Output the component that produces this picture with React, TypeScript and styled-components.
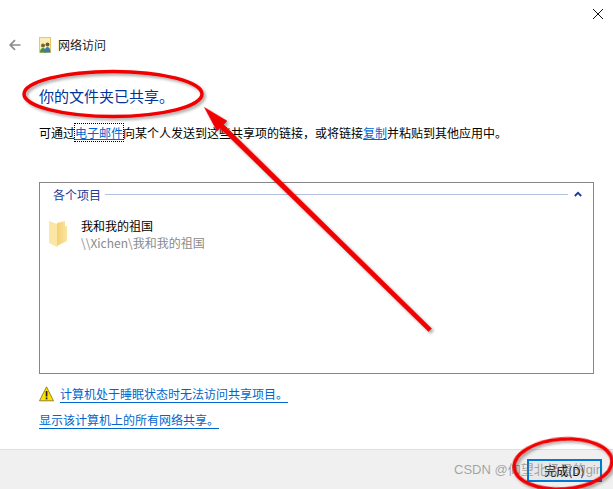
import React from 'react';
import styled, { createGlobalStyle } from 'styled-components';

const GlobalStyle = createGlobalStyle`
  html, body {
    margin: 0;
    padding: 0;
    background: #fff;
  }
  body {
    font-family: "Noto Sans CJK SC", "Liberation Sans", sans-serif;
    font-size: 12px;
  }
`;

const Window = styled.div`
  position: relative;
  width: 613px;
  height: 489px;
  display: flex;
  flex-direction: column;
  overflow: hidden;
  background: #fff;
`;

const TitleBar = styled.div`
  height: 37px;
  display: flex;
  justify-content: flex-end;
  padding: 9px 10px 0 0;
  box-sizing: border-box;
`;

const NavRow = styled.div`
  height: 16px;
  display: flex;
  align-items: center;
  padding-left: 9px;
  color: #1a1a1a;
  line-height: 16px;
`;

const NavIcon = styled.svg`
  margin-left: 18px;
  margin-right: 7px;
`;

const Content = styled.div`
  flex: 1;
  padding: 33px 19px 0 39px;
  display: flex;
  flex-direction: column;
`;

const Heading = styled.h1`
  margin: 0;
  font-size: 15px;
  font-weight: 400;
  line-height: 20px;
  color: #003399;
`;

const Description = styled.p`
  margin: 18px 0 0;
  line-height: 18px;
  color: #000;
`;

const InlineLink = styled.a<{ $focused?: boolean }>`
  color: #0066cc;
  text-decoration: underline;
  outline: ${props => (props.$focused ? '1px dotted #000' : 'none')};
`;

const ItemsBox = styled.section`
  margin-top: 40px;
  height: 192px;
  box-sizing: border-box;
  border: 1px solid #868686;
  padding: 2px 11px 0 13px;
`;

const GroupHeader = styled.div`
  display: flex;
  align-items: center;
  height: 18px;
  color: #1f3a93;
`;

const GroupLine = styled.div`
  flex: 1;
  height: 1px;
  margin: 0 6px 0 4px;
  background: #b4c0e0;
`;

const ItemRow = styled.div`
  display: flex;
  margin: 18px 0 0 -4px;
`;

const ItemText = styled.div`
  margin-left: 13px;
  margin-top: -4px;
`;

const ItemName = styled.div`
  line-height: 17px;
  color: #000;
`;

const ItemPath = styled.div`
  line-height: 17px;
  color: #8a8a8a;
`;

const NoticeRow = styled.div`
  margin-top: 11px;
  height: 18px;
  display: flex;
  align-items: center;
  gap: 6px;
`;

const FooterLink = styled.a`
  color: #0066cc;
  line-height: 16px;
  border-bottom: 1px solid #0066cc;
`;

const AllSharesRow = styled.div`
  margin-top: 8px;
  height: 18px;
  display: flex;
  align-items: center;
`;

const Footer = styled.footer`
  height: 40px;
  box-sizing: border-box;
  border-top: 1px solid #dfdfdf;
  background: #f0f0f0;
  display: flex;
  justify-content: flex-end;
  padding: 9px 11px 0 0;
`;

const DoneButton = styled.button`
  width: 75px;
  height: 23px;
  box-sizing: border-box;
  padding: 0;
  border: 2px solid #0078d7;
  background: #e8e8e8;
  color: #000;
  font: inherit;
  line-height: 16px;
`;

const Watermark = styled.div`
  position: absolute;
  left: 454px;
  top: 461px;
  font-family: "Liberation Sans", "Noto Sans CJK SC", sans-serif;
  font-size: 13px;
  line-height: 18px;
  color: rgba(110, 110, 110, 0.6);
  white-space: nowrap;
  pointer-events: none;
`;

const Annotations = styled.svg`
  position: absolute;
  inset: 0;
  pointer-events: none;
`;

const App: React.FC = () => {
  return (
    <Window>
      <GlobalStyle />
      <TitleBar>
        <svg width="10" height="10" viewBox="0 0 10 10">
          <path d="M0 0L10 10M10 0L0 10" stroke="#111" strokeWidth="1" fill="none" />
        </svg>
      </TitleBar>
      <NavRow>
        <svg width="12" height="12" viewBox="0 0 12 12">
          <path d="M11.5 6H1.5M6 1.2L1.2 6L6 10.8" stroke="#8c8c8c" strokeWidth="1.7" fill="none" />
        </svg>
        <NavIcon width="12" height="16" viewBox="0 0 12 16">
          <rect x="0.5" y="0.5" width="11" height="15" fill="#fbeeb4" stroke="#e8c860" />
          <circle cx="4" cy="8.500" r="2" fill="#7a6238" />
          <path d="M1 15.500c0-3 1.200-4.500 3-4.500s3 1.500 3 4.500z" fill="#3f8f4f" />
          <circle cx="8.500" cy="7.500" r="2" fill="#6b5a3a" />
          <path d="M5.500 15.500c0-3.400 1.200-5.500 3-5.500s3 2.100 3 5.500z" fill="#3b78b5" />
        </NavIcon>
        网络访问
      </NavRow>
      <Content>
        <Heading>你的文件夹已共享。</Heading>
        <Description>
          可通过<InlineLink $focused>电子邮件</InlineLink>向某个人发送到这些共享项的链接，或将链接<InlineLink>复制</InlineLink>并粘贴到其他应用中。
        </Description>
        <ItemsBox>
          <GroupHeader>
            各个项目
            <GroupLine />
            <svg width="8" height="6" viewBox="0 0 8 6">
              <path d="M0.8 5L4 1.800L7.2 5" stroke="#1f3a93" strokeWidth="1.800" fill="none" />
            </svg>
          </GroupHeader>
          <ItemRow>
            <svg width="19" height="27" viewBox="0 0 19 27">
              <defs>
                <linearGradient id="folder-front" x1="0" y1="0" x2="1" y2="0">
                  <stop offset="0" stopColor="#f3d074" />
                  <stop offset="1" stopColor="#fbe5a0" />
                </linearGradient>
              </defs>
              <path d="M8 2L16 0V5H18V20L8 25z" fill="url(#folder-front)" />
              <path d="M0 0L8 3V26L0 22z" fill="#fbe6a6" />
            </svg>
            <ItemText>
              <ItemName>我和我的祖国</ItemName>
              <ItemPath>\\Xichen\我和我的祖国</ItemPath>
            </ItemText>
          </ItemRow>
        </ItemsBox>
        <NoticeRow>
          <svg width="15" height="16" viewBox="0 0 15 16">
            <path d="M7.500 0.800L14.500 14.800H0.500z" fill="#ffe100" stroke="#7a6a20" strokeWidth="0.800" />
            <rect x="6.700" y="5" width="1.700" height="5.500" fill="#222" />
            <rect x="6.700" y="11.500" width="1.700" height="1.800" fill="#222" />
          </svg>
          <FooterLink>计算机处于睡眠状态时无法访问共享项目。</FooterLink>
        </NoticeRow>
        <AllSharesRow>
          <FooterLink>显示该计算机上的所有网络共享。</FooterLink>
        </AllSharesRow>
      </Content>
      <Footer>
        <DoneButton>完成(D)</DoneButton>
      </Footer>
      <Watermark>CSDN @仰望北极星的girl</Watermark>
      <Annotations width="613" height="489" viewBox="0 0 613 489">
        <defs>
          <filter id="annotation-shadow" x="-20%" y="-20%" width="140%" height="140%">
            <feDropShadow dx="2" dy="2" stdDeviation="1.500" floodColor="#000" floodOpacity="0.35" />
          </filter>
        </defs>
        <g filter="url(#annotation-shadow)" fill="none" stroke="#f00000">
          <ellipse cx="113" cy="94" rx="89" ry="22.500" strokeWidth="3.500" />
          <ellipse cx="563" cy="464" rx="49" ry="25" strokeWidth="3.500" transform="rotate(-4 563 464)" />
          <path
            d="M204.500 107.500L227 121L223.500 124.500L431.500 328.500L428.500 331.500L220 128L217 131z"
            fill="#f00000"
            strokeWidth="0.500"
            strokeLinejoin="round"
          />
        </g>
      </Annotations>
    </Window>
  );
};

export default App;
